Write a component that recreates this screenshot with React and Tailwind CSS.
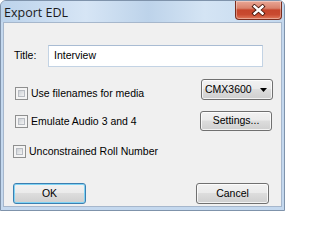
function Checkbox() {
  return (
    <div className="w-[13px] h-[13px] shrink-0 border border-[#8e8f8f] bg-[#f4f4f4] p-[2px]">
      <div className="w-full h-full border border-[#b8bcc2] bg-gradient-to-br from-[#cdd1d6] to-[#f3f3f3]" />
    </div>
  )
}

function Button({ children, primary, className = '' }) {
  return (
    <div
      className={`flex items-center justify-center rounded-[3px] border text-black bg-[linear-gradient(#f2f2f2_0%,#ebebeb_45%,#dddddd_50%,#cfcfcf_100%)] ${
        primary
          ? 'border-[#3c7fb1] shadow-[inset_0_0_0_1px_#7fd3f4]'
          : 'border-[#707070] shadow-[inset_0_0_0_1px_rgba(255,255,255,0.75)]'
      } ${className}`}
    >
      {children}
    </div>
  )
}

function CheckRow({ label, className = '' }) {
  return (
    <div className={`flex items-center gap-[3px] ${className}`}>
      <Checkbox />
      <span className="leading-none">{label}</span>
    </div>
  )
}

function CloseButton() {
  return (
    <div className="mr-[2px] w-[47px] h-[19px] flex items-center justify-center rounded-b-[4px] border border-t-0 border-[#7a2c1d] bg-[linear-gradient(#e9a796_0%,#d9826c_40%,#c6452b_50%,#c94a30_75%,#e0785a_100%)] shadow-[inset_0_0_0_1px_rgba(255,255,255,0.35)]">
      <svg width="15" height="12" viewBox="0 0 15 12">
        <path d="M3.5 2.5 L11.5 9.5 M11.5 2.5 L3.5 9.5" stroke="#4a1a10" strokeWidth="4.2" strokeLinecap="square" />
        <path d="M3.5 2.5 L11.5 9.5 M11.5 2.5 L3.5 9.5" stroke="#ffffff" strokeWidth="2.4" strokeLinecap="square" />
      </svg>
    </div>
  )
}

export default function App() {
  return (
    <div className="w-[285px] h-[213px] bg-white" style={{ fontFamily: '"Liberation Sans", Arial, sans-serif' }}>
      <div className="w-[285px] h-[211px] flex flex-col rounded-t-[6px] border border-[#7f93ab] bg-[#c4d8ee] overflow-hidden">
        {/* Title bar */}
        <div className="h-[21px] shrink-0 flex items-start justify-between bg-[linear-gradient(90deg,#bcd3eb_0%,#d6e5f5_30%,#bdd3ea_52%,#d4e4f4_72%,#c3d8ee_100%)]">
          <span
            className="pl-[3px] pt-[4px] text-[12.5px] leading-[15px] text-[#1b1b1b]"
            style={{ fontFamily: '"Open Sans", "Noto Sans", sans-serif' }}
          >
            Export EDL
          </span>
          <CloseButton />
        </div>

        {/* Client area */}
        <div className="mx-[2px] mb-[3px] flex-1 flex flex-col border border-[#a6b7cc] bg-[#f0f0f0] text-[10.5px] text-black">
          {/* Title row */}
          <div className="mt-[22px] flex items-center pl-[10px]">
            <span className="w-[34px]">Title:</span>
            <div className="w-[215px] h-[22px] flex items-center pl-[5px] bg-white border border-[#c3d3e4] border-t-[#a9bcd3]">
              Interview
            </div>
          </div>

          {/* Row 2 */}
          <div className="mt-[12px] h-[21px] flex items-start justify-between pl-[11px] pr-[8px]">
            <CheckRow label="Use filenames for media" className="mt-[8px]" />
            <Button className="w-[72px] h-[21px] !justify-between pl-[3px] pr-[5px]">
              <span>CMX3600</span>
              <svg width="7" height="4" viewBox="0 0 7 4">
                <path d="M0 0 H7 L3.5 4 Z" fill="#000" />
              </svg>
            </Button>
          </div>

          {/* Row 3 */}
          <div className="mt-[11px] h-[20px] flex items-center justify-between pl-[11px] pr-[9px]">
            <CheckRow label="Emulate Audio 3 and 4" />
            <Button className="w-[72px] h-[20px]">Settings...</Button>
          </div>

          {/* Row 4 */}
          <CheckRow label="Unconstrained Roll Number" className="mt-[14px] pl-[9px]" />

          {/* Buttons */}
          <div className="mt-[25px] flex justify-between pl-[9px] pr-[12px]">
            <Button primary className="w-[73px] h-[21px]">OK</Button>
            <Button className="w-[73px] h-[21px]">Cancel</Button>
          </div>
        </div>
      </div>
    </div>
  )
}
